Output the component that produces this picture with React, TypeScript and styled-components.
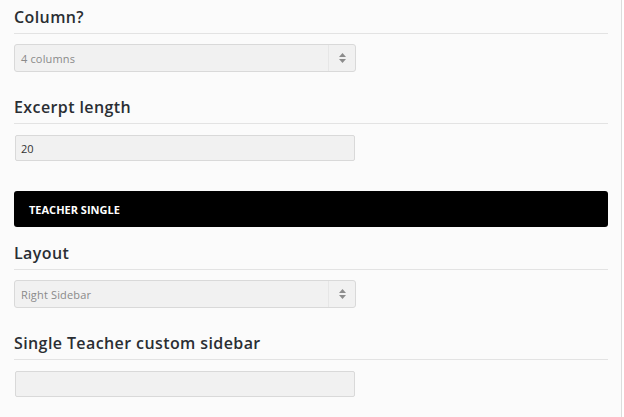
import React from "react";
import styled, { createGlobalStyle } from "styled-components";

const Global = createGlobalStyle`
  html, body { margin: 0; padding: 0; background: #ffffff; }
  body { font-family: "Open Sans", "Liberation Sans", sans-serif; }
`;

const Panel = styled.div`
  width: 622px;
  min-height: 417px;
  box-sizing: border-box;
  background: #fbfbfb;
  border-right: 1px solid #dcdcdc;
  padding: 0 13px 0 14px;
  display: flex;
  flex-direction: column;
`;

const Section = styled.section<{ $gap?: number }>`
  display: flex;
  flex-direction: column;
  margin-bottom: ${(p) => p.$gap ?? 18}px;
`;

const Heading = styled.h3`
  margin: 0;
  padding: 6px 0 5px;
  font-size: 16px;
  line-height: 22px;
  font-weight: 600;
  letter-spacing: 0.4px;
  color: #2a2e33;
  border-bottom: 1px solid #e3e3e3;
`;

const FieldWrap = styled.div<{ $top?: number }>`
  margin-top: ${(p) => p.$top ?? 10}px;
`;

const SelectBox = styled.div`
  width: 342px;
  height: 28px;
  box-sizing: border-box;
  background: #f1f1f1;
  border: 1px solid #d9d9d9;
  border-radius: 3px;
  display: flex;
  align-items: stretch;
`;

const SelectText = styled.div`
  flex: 1;
  display: flex;
  align-items: center;
  padding-left: 6px;
  font-size: 11px;
  letter-spacing: 0.15px;
  color: #8a8a8a;
`;

const ArrowCell = styled.div`
  width: 26px;
  border-left: 1px solid #e6e6e6;
  display: flex;
  align-items: center;
  justify-content: center;
`;

const TextInput = styled.div`
  width: 340px;
  height: 26px;
  margin-left: 1px;
  box-sizing: border-box;
  background: #f1f1f1;
  border: 1px solid #d9d9d9;
  border-radius: 2px;
  display: flex;
  align-items: center;
  padding-left: 5px;
  font-size: 11px;
  color: #333;
`;

const Bar = styled.div`
  height: 36px;
  background: #000;
  border-radius: 3px;
  display: flex;
  align-items: center;
  padding-left: 15px;
  margin-bottom: 9px;
  font-size: 11px;
  font-weight: 700;
  color: #fff;
`;

const Arrows = () => (
  <svg width="9" height="12" viewBox="0 0 9 12">
    <path d="M4.5 1 L8 5 H1 Z" fill="#8c8c8c" />
    <path d="M4.5 11 L8 7 H1 Z" fill="#8c8c8c" />
  </svg>
);

const Select = ({ value }: { value: string }) => (
  <SelectBox>
    <SelectText>{value}</SelectText>
    <ArrowCell>
      <Arrows />
    </ArrowCell>
  </SelectBox>
);

export default function App() {
  return (
    <>
      <Global />
      <Panel>
        <Section>
          <Heading>Column?</Heading>
          <FieldWrap>
            <Select value="4 columns" />
          </FieldWrap>
        </Section>
        <Section $gap={30}>
          <Heading>Excerpt length</Heading>
          <FieldWrap $top={11}>
            <TextInput>20</TextInput>
          </FieldWrap>
        </Section>
        <Bar>TEACHER SINGLE</Bar>
        <Section>
          <Heading>Layout</Heading>
          <FieldWrap>
            <Select value="Right Sidebar" />
          </FieldWrap>
        </Section>
        <Section>
          <Heading>Single Teacher custom sidebar</Heading>
          <FieldWrap $top={11}>
            <TextInput />
          </FieldWrap>
        </Section>
      </Panel>
    </>
  );
}
